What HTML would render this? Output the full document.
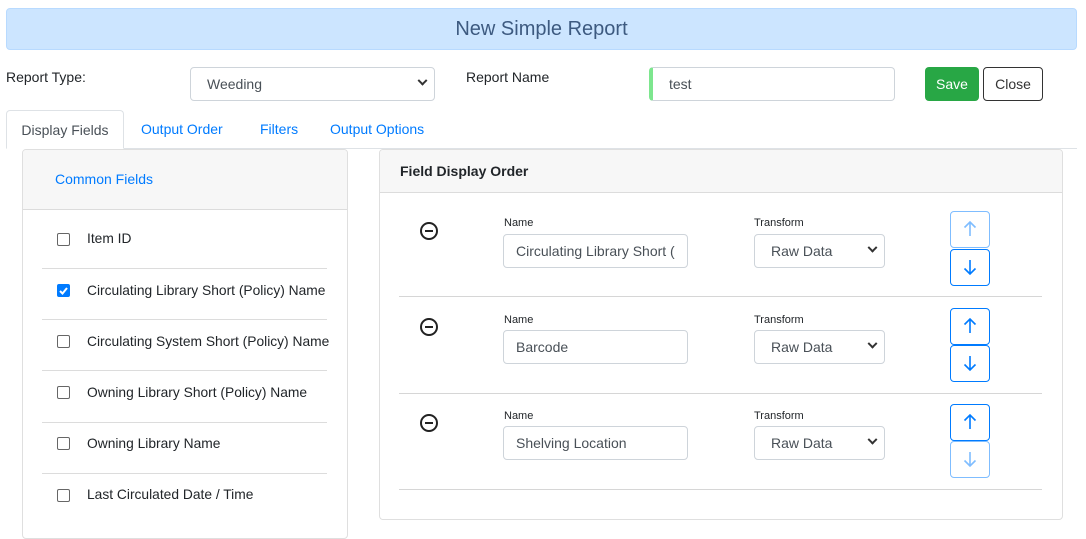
<!DOCTYPE html>
<html><head><meta charset="utf-8"><style>
*{box-sizing:border-box;margin:0;padding:0}
body{width:1086px;height:523px;background:#fff;font-family:"Liberation Sans",sans-serif;font-size:14px;color:#212529;position:relative;overflow:hidden}
.a{position:absolute}
.banner{left:6px;top:8px;width:1071px;height:42px;background:#cce5ff;border:1px solid #b8daff;border-radius:4px;color:#3d5a80;font-size:20px;font-weight:300;text-align:center;line-height:40px}
.sel,.inp{border:1px solid #ced4da;border-radius:4px;background:#fff;padding-left:16px;color:#495057}
.chev{position:absolute;right:8px;top:50%;margin-top:-4px;width:7px;height:7px;border-right:2px solid #333;border-bottom:2px solid #333;transform:rotate(45deg) translate(-2px,-2px)}
.tab{color:#007bff;top:121px;font-size:14px}
.card{border:1px solid #dfdfdf;border-radius:4px;background:#fff}
.hdr{background:#f7f7f7;border-bottom:1px solid #dcdcdc}
.sep{left:42px;width:285px;height:1px;background:#dcdcdc}
.cb{left:57px;width:13px;height:13px;border:1px solid #666;border-radius:2px;background:#fff}
.lab{left:87px;font-size:13.8px}
.hr{left:399px;width:643px;height:1px;background:#d6d6d6}
.btn{width:40px;height:37px;border:1px solid #007bff;border-radius:4px;background:#fff}
.btn.f{border-color:#7fbdff}
.sm{font-size:11px}
.minus{width:18px;height:18px;border:2px solid #222;border-radius:50%}
.minus:after{content:"";position:absolute;left:3px;top:6px;width:8px;height:2px;background:#222}
</style></head><body>
<div class="a banner">New Simple Report</div>
<div class="a" style="left:6px;top:69px">Report Type:</div>
<div class="a sel" style="left:190px;top:67px;width:245px;height:34px;line-height:32px">Weeding<span class="chev"></span></div>
<div class="a" style="left:466px;top:69px">Report Name</div>
<div class="a inp" style="left:649px;top:67px;width:246px;height:34px;line-height:32px;border-left:4px solid #7de68e">test</div>
<div class="a" style="left:925px;top:67px;width:54px;height:34px;background:#28a745;border-radius:4px;color:#fff;text-align:center;line-height:34px">Save</div>
<div class="a" style="left:983px;top:67px;width:60px;height:34px;border:1px solid #333;border-radius:4px;text-align:center;line-height:32px;color:#333">Close</div>

<div class="a" style="left:6px;top:148px;width:1071px;height:1px;background:#dee2e6"></div>
<div class="a" style="left:6px;top:110px;width:118px;height:39px;border:1px solid #dee2e6;border-bottom:1px solid #fff;border-radius:4px 4px 0 0;background:#fff;text-align:center;line-height:38px;color:#495057">Display Fields</div>
<div class="a tab" style="left:141px">Output Order</div>
<div class="a tab" style="left:260px">Filters</div>
<div class="a tab" style="left:330px">Output Options</div>

<div class="a card" style="left:22px;top:149px;width:326px;height:390px;overflow:hidden">
<div class="hdr" style="height:60px"></div></div>
<div class="a" style="left:55px;top:171px;color:#007bff">Common Fields</div>
<div class="a cb" style="top:233px"></div><div class="a lab" style="top:231px">Item ID</div>
<div class="a sep" style="top:268px"></div>
<div class="a cb" style="top:284px;background:#007bff;border-color:#007bff"><svg width="11" height="11" style="position:absolute;left:0;top:0"><path d="M2 6l2.5 2.5L9 3" stroke="#fff" stroke-width="2" fill="none"/></svg></div><div class="a lab" style="top:283px">Circulating Library Short (Policy) Name</div>
<div class="a sep" style="top:319px"></div>
<div class="a cb" style="top:335px"></div><div class="a lab" style="top:334px">Circulating System Short (Policy) Name</div>
<div class="a sep" style="top:370px"></div>
<div class="a cb" style="top:386px"></div><div class="a lab" style="top:385px">Owning Library Short (Policy) Name</div>
<div class="a sep" style="top:422px"></div>
<div class="a cb" style="top:437px"></div><div class="a lab" style="top:436px">Owning Library Name</div>
<div class="a sep" style="top:473px"></div>
<div class="a cb" style="top:489px"></div><div class="a lab" style="top:487px">Last Circulated Date / Time</div>

<div class="a card" style="left:379px;top:149px;width:684px;height:371px;overflow:hidden">
<div class="hdr" style="height:43px;padding:13px 0 0 20px;font-weight:bold;font-size:14px">Field Display Order</div></div>

<div class="a minus" style="left:420px;top:222px"></div>
<div class="a sm" style="left:504px;top:217px">Name</div>
<div class="a inp" style="left:503px;top:234px;width:185px;height:34px;line-height:32px;padding-left:12px;overflow:hidden;white-space:nowrap">Circulating Library Short (</div>
<div class="a sm" style="left:754px;top:217px">Transform</div>
<div class="a sel" style="left:754px;top:234px;width:131px;height:34px;line-height:32px">Raw Data<span class="chev"></span></div>
<div class="a btn f" style="left:950px;top:211px"><svg width="38" height="35"><path d="M19 10v14M13.5 15.5l5.5-5.5 5.5 5.5" stroke="#7fbdff" stroke-width="1.6" fill="none"/></svg></div>
<div class="a btn" style="left:950px;top:249px"><svg width="38" height="35"><path d="M19 10v14M13.5 18.5l5.5 5.5 5.5-5.5" stroke="#007bff" stroke-width="1.6" fill="none"/></svg></div>
<div class="a hr" style="top:296px"></div>

<div class="a minus" style="left:420px;top:318px"></div>
<div class="a sm" style="left:504px;top:314px">Name</div>
<div class="a inp" style="left:503px;top:330px;width:185px;height:34px;line-height:32px;padding-left:12px">Barcode</div>
<div class="a sm" style="left:754px;top:314px">Transform</div>
<div class="a sel" style="left:754px;top:330px;width:131px;height:34px;line-height:32px">Raw Data<span class="chev"></span></div>
<div class="a btn" style="left:950px;top:308px"><svg width="38" height="35"><path d="M19 10v14M13.5 15.5l5.5-5.5 5.5 5.5" stroke="#007bff" stroke-width="1.6" fill="none"/></svg></div>
<div class="a btn" style="left:950px;top:345px"><svg width="38" height="35"><path d="M19 10v14M13.5 18.5l5.5 5.5 5.5-5.5" stroke="#007bff" stroke-width="1.6" fill="none"/></svg></div>
<div class="a hr" style="top:393px"></div>

<div class="a minus" style="left:420px;top:414px"></div>
<div class="a sm" style="left:504px;top:410px">Name</div>
<div class="a inp" style="left:503px;top:426px;width:185px;height:34px;line-height:32px;padding-left:12px">Shelving Location</div>
<div class="a sm" style="left:754px;top:410px">Transform</div>
<div class="a sel" style="left:754px;top:426px;width:131px;height:34px;line-height:32px">Raw Data<span class="chev"></span></div>
<div class="a btn" style="left:950px;top:404px"><svg width="38" height="35"><path d="M19 10v14M13.5 15.5l5.5-5.5 5.5 5.5" stroke="#007bff" stroke-width="1.6" fill="none"/></svg></div>
<div class="a btn f" style="left:950px;top:441px"><svg width="38" height="35"><path d="M19 10v14M13.5 18.5l5.5 5.5 5.5-5.5" stroke="#7fbdff" stroke-width="1.6" fill="none"/></svg></div>
<div class="a hr" style="top:489px"></div>
</body></html>
